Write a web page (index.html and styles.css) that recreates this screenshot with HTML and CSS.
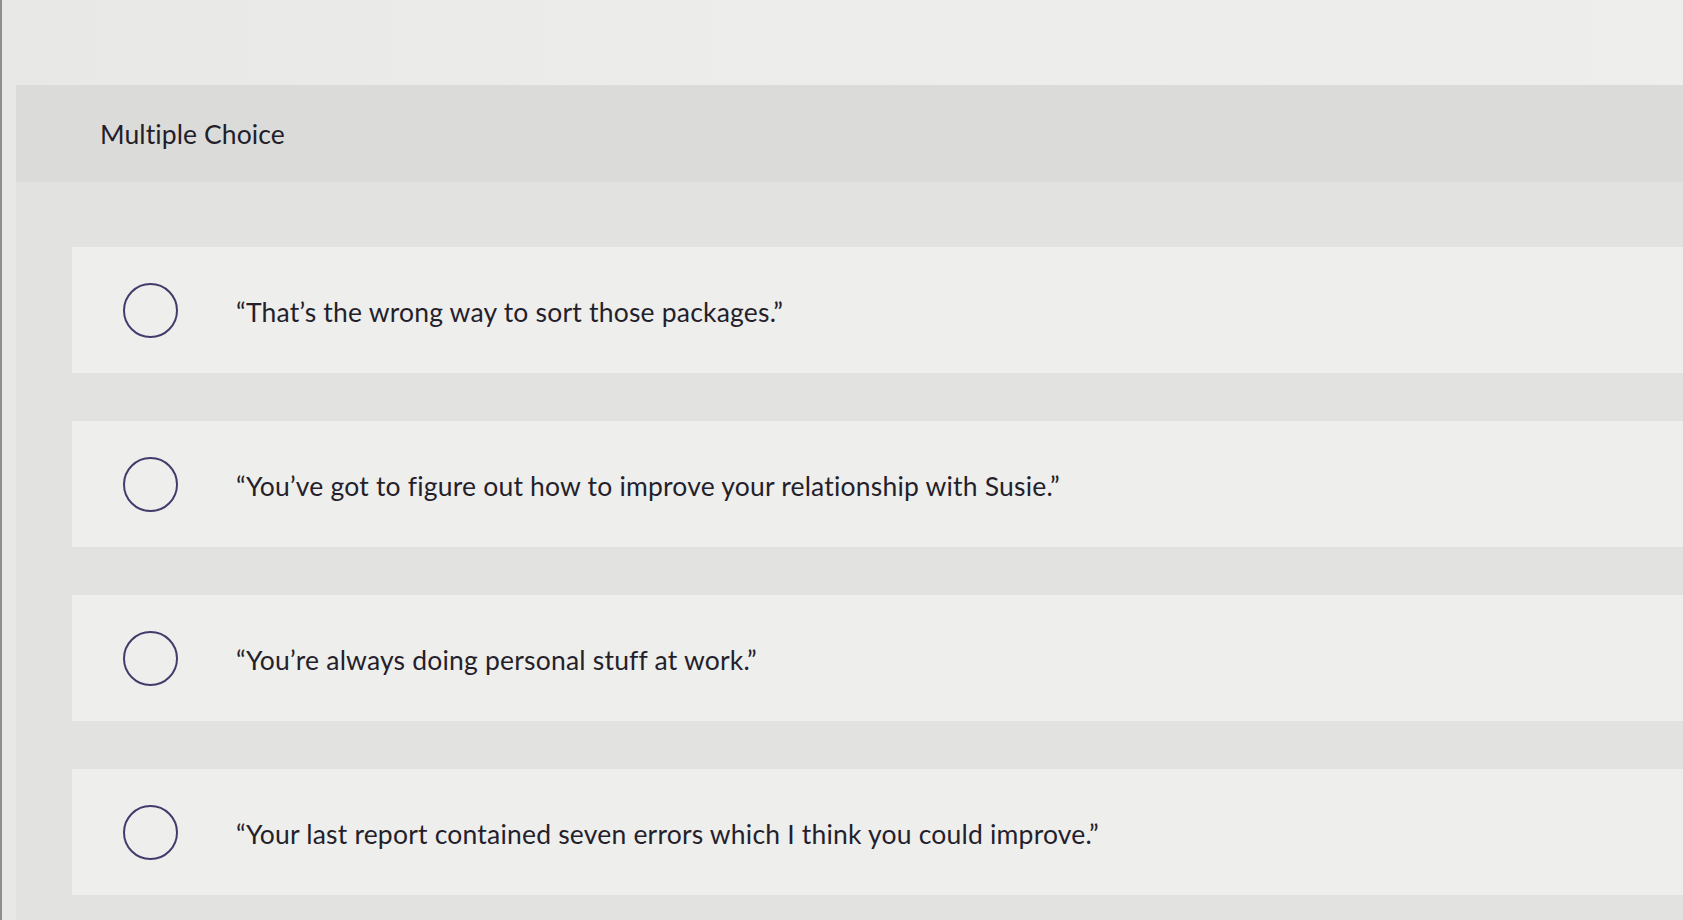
FILE: index.html
```html
<!DOCTYPE html>
<html lang="en">
<head>
<meta charset="utf-8">
<title>Multiple Choice</title>
<link rel="stylesheet" href="styles.css">
</head>
<body>
<div class="screen">
  <div class="page">
    <div class="header">
      <span class="title">Multiple Choice</span>
    </div>
    <div class="panel">
      <div class="choices">
        <label class="choice">
          <span class="radio"></span>
          <span class="text">“That’s the wrong way to sort those packages.”</span>
        </label>
        <label class="choice">
          <span class="radio"></span>
          <span class="text">“You’ve got to figure out how to improve your relationship with Susie.”</span>
        </label>
        <label class="choice">
          <span class="radio"></span>
          <span class="text">“You’re always doing personal stuff at work.”</span>
        </label>
        <label class="choice">
          <span class="radio"></span>
          <span class="text">“Your last report contained seven errors which I think you could improve.”</span>
        </label>
      </div>
    </div>
  </div>
</div>
</body>
</html>
```

FILE: styles.css
```css
html, body {
  margin: 0;
  padding: 0;
  height: 100%;
  overflow: hidden;
}

body {
  background: #ebebe9;
  font-family: Lato, "Open Sans", "Liberation Sans", sans-serif;
  color: #241f2b;
}

.screen {
  height: 920px;
  border-left: 2px solid #8f8f8d;
  padding: 85px 0 0 14px;
  box-sizing: border-box;
  background: linear-gradient(90deg, #e8e8e6 0%, #ececea 40%, #eeeeec 100%);
}

.page {
  display: flex;
  flex-direction: column;
  height: 100%;
}

.header {
  height: 97px;
  background: #dbdbda;
  display: flex;
  align-items: center;
  padding-left: 84px;
  box-sizing: border-box;
}

.title {
  font-size: 26.5px;
  letter-spacing: 0.1px;
  color: #231e2a;
}

.panel {
  flex: 1;
  background: #e2e2e1;
  padding: 65px 0 0 56px;
}

.choices {
  display: flex;
  flex-direction: column;
  gap: 48px;
}

.choice {
  height: 126px;
  background: #eeeeec;
  display: flex;
  align-items: center;
  padding-left: 51px;
  gap: 58px;
}

.radio {
  flex: none;
  width: 51px;
  height: 51px;
  border: 2px solid #413c6b;
  border-radius: 50%;
  box-sizing: content-box;
}

.text {
  font-size: 26.5px;
  letter-spacing: 0.2px;
  color: #251f2c;
  padding-top: 4px;
}
```
